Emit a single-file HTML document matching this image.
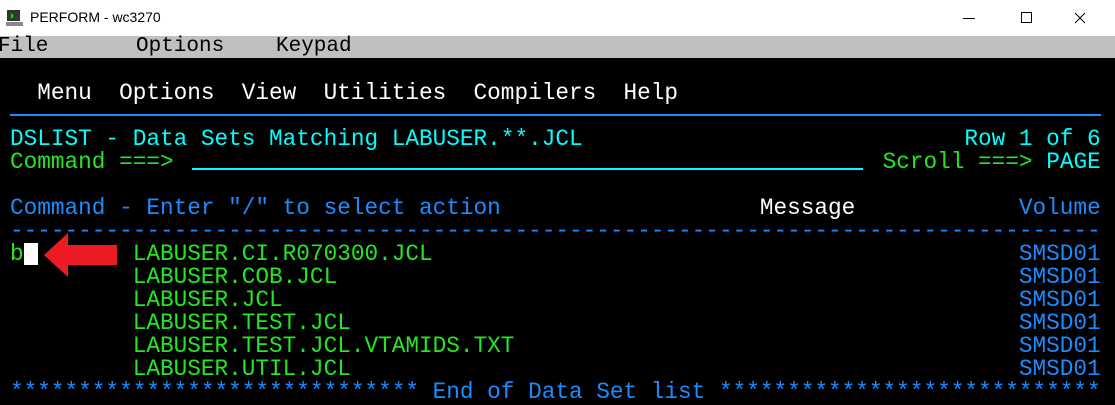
<!DOCTYPE html>
<html><head><meta charset="utf-8"><style>
*{margin:0;padding:0;box-sizing:border-box}
body{width:1115px;height:405px;overflow:hidden;background:#000;position:relative;font-family:"Liberation Mono",monospace}
#title{position:absolute;left:0;top:0;width:1115px;height:36px;background:#fff;font-family:"Liberation Sans",sans-serif;font-size:14px;color:#000}
#menu{position:absolute;left:0;top:36px;width:1115px;height:22px;background:#c0c0c0;font-size:21px;line-height:22px;color:#000;white-space:pre}
.r{position:absolute;left:10px;font-size:22.73px;line-height:23px;height:23px;white-space:pre}
.w{color:#fff}.c{color:#00ffff}.g{color:#22e822}.b{color:#1a8cff}
</style></head><body>
<div id="title">
<svg style="position:absolute;left:6px;top:9px" width="18" height="18" viewBox="0 0 18 18"><rect x="1" y="1" width="13" height="11" fill="#333"/><rect x="3" y="3" width="9" height="7" fill="#1a4a1a"/><path d="M5 5l2 2-2 2" stroke="#4f4" fill="none"/><rect x="0" y="13" width="17" height="4" fill="#888"/></svg>
<span style="position:absolute;left:30px;top:9px">PERFORM - wc3270</span>
<svg style="position:absolute;left:960px;top:10px" width="140" height="16" viewBox="0 0 140 16"><path d="M3 8.5h12" stroke="#000"/><rect x="61.5" y="2.5" width="10" height="10" fill="none" stroke="#000"/><path d="M115 3l10 10M125 3l-10 10" stroke="#000"/></svg>
</div>
<div id="menu"><span style="position:absolute;left:-2px">File</span><span style="position:absolute;left:136px">Options</span><span style="position:absolute;left:276px">Keypad</span></div>

<div class="r w" style="top:82px">  Menu  Options  View  Utilities  Compilers  Help</div>
<div style="position:absolute;left:10px;top:114px;width:1091px;height:2px;background:#1a8cff"></div>
<div class="r c" style="top:128px">DSLIST - Data Sets Matching LABUSER.**.JCL                            Row 1 of 6</div>
<div class="r" style="top:151px"><span class="g">Command ===> </span><span class="c">                                                  </span><span class="g"> Scroll ===> </span><span class="c">PAGE</span></div>
<div style="position:absolute;left:192px;top:168px;width:671px;height:2px;background:#00ffff"></div>
<div class="r" style="top:197px"><span class="b">Command - Enter "/" to select action</span><span class="w">                   Message</span><span class="b">            Volume</span></div>
<div class="r b" style="top:220px">--------------------------------------------------------------------------------</div>
<div class="r" style="top:243px"><span class="g">b</span><span class="g">        LABUSER.CI.R070300.JCL</span></div>
<div style="position:absolute;left:24px;top:243px;width:14px;height:22px;background:#fff"></div>
<svg style="position:absolute;left:42px;top:232px" width="78" height="46" viewBox="0 0 78 46"><path d="M2 23L26 1V13H75V33H26V45Z" fill="#ed1c24"/></svg>
<div class="r g" style="top:266px">         LABUSER.COB.JCL</div>
<div class="r g" style="top:289px">         LABUSER.JCL</div>
<div class="r g" style="top:312px">         LABUSER.TEST.JCL</div>
<div class="r g" style="top:335px">         LABUSER.TEST.JCL.VTAMIDS.TXT</div>
<div class="r g" style="top:358px">         LABUSER.UTIL.JCL</div>
<div class="r b" style="top:243px">                                                                          SMSD01</div>
<div class="r b" style="top:266px">                                                                          SMSD01</div>
<div class="r b" style="top:289px">                                                                          SMSD01</div>
<div class="r b" style="top:312px">                                                                          SMSD01</div>
<div class="r b" style="top:335px">                                                                          SMSD01</div>
<div class="r b" style="top:358px">                                                                          SMSD01</div>
<div class="r b" style="top:381px">****************************** End of Data Set list ****************************</div>
</body></html>
